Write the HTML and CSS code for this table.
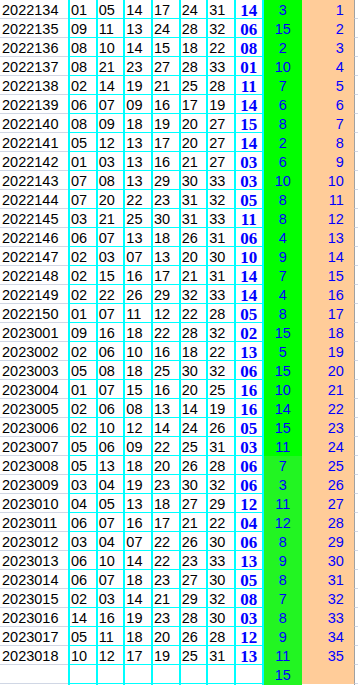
FILE: index.html
```html
<!DOCTYPE html>
<html>
<head>
<meta charset="utf-8">
<link rel="stylesheet" href="styles.css">
</head>
<body>
<div class="sheet">
<div class="r"><div class="id">2022134</div><div class="n">01</div><div class="n">05</div><div class="n">14</div><div class="n">17</div><div class="n">24</div><div class="n">31</div><div class="b">14</div><div class="g">3</div><div class="o">1</div><div class="e"></div></div>
<div class="r"><div class="id">2022135</div><div class="n">09</div><div class="n">11</div><div class="n">13</div><div class="n">24</div><div class="n">28</div><div class="n">32</div><div class="b">06</div><div class="g">15</div><div class="o">2</div><div class="e"></div></div>
<div class="r"><div class="id">2022136</div><div class="n">08</div><div class="n">10</div><div class="n">14</div><div class="n">15</div><div class="n">18</div><div class="n">22</div><div class="b">08</div><div class="g">2</div><div class="o">3</div><div class="e"></div></div>
<div class="r"><div class="id">2022137</div><div class="n">08</div><div class="n">21</div><div class="n">23</div><div class="n">27</div><div class="n">28</div><div class="n">33</div><div class="b">01</div><div class="g">10</div><div class="o">4</div><div class="e"></div></div>
<div class="r"><div class="id">2022138</div><div class="n">02</div><div class="n">14</div><div class="n">19</div><div class="n">21</div><div class="n">25</div><div class="n">28</div><div class="b">11</div><div class="g">7</div><div class="o">5</div><div class="e"></div></div>
<div class="r"><div class="id">2022139</div><div class="n">06</div><div class="n">07</div><div class="n">09</div><div class="n">16</div><div class="n">17</div><div class="n">19</div><div class="b">14</div><div class="g">6</div><div class="o">6</div><div class="e"></div></div>
<div class="r"><div class="id">2022140</div><div class="n">08</div><div class="n">09</div><div class="n">18</div><div class="n">19</div><div class="n">20</div><div class="n">27</div><div class="b">15</div><div class="g">8</div><div class="o">7</div><div class="e"></div></div>
<div class="r"><div class="id">2022141</div><div class="n">05</div><div class="n">12</div><div class="n">13</div><div class="n">17</div><div class="n">20</div><div class="n">27</div><div class="b">14</div><div class="g">2</div><div class="o">8</div><div class="e"></div></div>
<div class="r"><div class="id">2022142</div><div class="n">01</div><div class="n">03</div><div class="n">13</div><div class="n">16</div><div class="n">21</div><div class="n">27</div><div class="b">03</div><div class="g">6</div><div class="o">9</div><div class="e"></div></div>
<div class="r"><div class="id">2022143</div><div class="n">07</div><div class="n">08</div><div class="n">13</div><div class="n">29</div><div class="n">30</div><div class="n">33</div><div class="b">03</div><div class="g">10</div><div class="o">10</div><div class="e"></div></div>
<div class="r"><div class="id">2022144</div><div class="n">07</div><div class="n">20</div><div class="n">22</div><div class="n">23</div><div class="n">31</div><div class="n">32</div><div class="b">05</div><div class="g">8</div><div class="o">11</div><div class="e"></div></div>
<div class="r"><div class="id">2022145</div><div class="n">03</div><div class="n">21</div><div class="n">25</div><div class="n">30</div><div class="n">31</div><div class="n">33</div><div class="b">11</div><div class="g">8</div><div class="o">12</div><div class="e"></div></div>
<div class="r"><div class="id">2022146</div><div class="n">06</div><div class="n">07</div><div class="n">13</div><div class="n">18</div><div class="n">26</div><div class="n">31</div><div class="b">06</div><div class="g">4</div><div class="o">13</div><div class="e"></div></div>
<div class="r"><div class="id">2022147</div><div class="n">02</div><div class="n">03</div><div class="n">07</div><div class="n">13</div><div class="n">20</div><div class="n">30</div><div class="b">10</div><div class="g">9</div><div class="o">14</div><div class="e"></div></div>
<div class="r"><div class="id">2022148</div><div class="n">02</div><div class="n">15</div><div class="n">16</div><div class="n">17</div><div class="n">21</div><div class="n">31</div><div class="b">14</div><div class="g">7</div><div class="o">15</div><div class="e"></div></div>
<div class="r"><div class="id">2022149</div><div class="n">02</div><div class="n">22</div><div class="n">26</div><div class="n">29</div><div class="n">32</div><div class="n">33</div><div class="b">14</div><div class="g">4</div><div class="o">16</div><div class="e"></div></div>
<div class="r"><div class="id">2022150</div><div class="n">01</div><div class="n">07</div><div class="n">11</div><div class="n">12</div><div class="n">22</div><div class="n">28</div><div class="b">05</div><div class="g">8</div><div class="o">17</div><div class="e"></div></div>
<div class="r"><div class="id">2023001</div><div class="n">09</div><div class="n">16</div><div class="n">18</div><div class="n">22</div><div class="n">28</div><div class="n">32</div><div class="b">02</div><div class="g">15</div><div class="o">18</div><div class="e"></div></div>
<div class="r"><div class="id">2023002</div><div class="n">02</div><div class="n">06</div><div class="n">10</div><div class="n">16</div><div class="n">18</div><div class="n">22</div><div class="b">13</div><div class="g">5</div><div class="o">19</div><div class="e"></div></div>
<div class="r"><div class="id">2023003</div><div class="n">05</div><div class="n">08</div><div class="n">18</div><div class="n">25</div><div class="n">30</div><div class="n">32</div><div class="b">06</div><div class="g">15</div><div class="o">20</div><div class="e"></div></div>
<div class="r"><div class="id">2023004</div><div class="n">01</div><div class="n">07</div><div class="n">15</div><div class="n">16</div><div class="n">20</div><div class="n">25</div><div class="b">16</div><div class="g">10</div><div class="o">21</div><div class="e"></div></div>
<div class="r"><div class="id">2023005</div><div class="n">02</div><div class="n">06</div><div class="n">08</div><div class="n">13</div><div class="n">14</div><div class="n">19</div><div class="b">16</div><div class="g">14</div><div class="o">22</div><div class="e"></div></div>
<div class="r"><div class="id">2023006</div><div class="n">02</div><div class="n">10</div><div class="n">12</div><div class="n">14</div><div class="n">24</div><div class="n">26</div><div class="b">05</div><div class="g">15</div><div class="o">23</div><div class="e"></div></div>
<div class="r"><div class="id">2023007</div><div class="n">05</div><div class="n">06</div><div class="n">09</div><div class="n">22</div><div class="n">25</div><div class="n">31</div><div class="b">03</div><div class="g">11</div><div class="o">24</div><div class="e"></div></div>
<div class="r late"><div class="id">2023008</div><div class="n">05</div><div class="n">13</div><div class="n">18</div><div class="n">20</div><div class="n">26</div><div class="n">28</div><div class="b">06</div><div class="g">7</div><div class="o">25</div><div class="e"></div></div>
<div class="r late"><div class="id">2023009</div><div class="n">03</div><div class="n">04</div><div class="n">19</div><div class="n">23</div><div class="n">30</div><div class="n">32</div><div class="b">06</div><div class="g">3</div><div class="o">26</div><div class="e"></div></div>
<div class="r late"><div class="id">2023010</div><div class="n">04</div><div class="n">05</div><div class="n">13</div><div class="n">18</div><div class="n">27</div><div class="n">29</div><div class="b">12</div><div class="g">11</div><div class="o">27</div><div class="e"></div></div>
<div class="r late"><div class="id">2023011</div><div class="n">06</div><div class="n">07</div><div class="n">16</div><div class="n">17</div><div class="n">21</div><div class="n">22</div><div class="b">04</div><div class="g">12</div><div class="o">28</div><div class="e"></div></div>
<div class="r late"><div class="id">2023012</div><div class="n">03</div><div class="n">04</div><div class="n">07</div><div class="n">22</div><div class="n">26</div><div class="n">30</div><div class="b">06</div><div class="g">8</div><div class="o">29</div><div class="e"></div></div>
<div class="r late"><div class="id">2023013</div><div class="n">06</div><div class="n">10</div><div class="n">14</div><div class="n">22</div><div class="n">23</div><div class="n">33</div><div class="b">13</div><div class="g">9</div><div class="o">30</div><div class="e"></div></div>
<div class="r late"><div class="id">2023014</div><div class="n">06</div><div class="n">07</div><div class="n">18</div><div class="n">23</div><div class="n">27</div><div class="n">30</div><div class="b">05</div><div class="g">8</div><div class="o">31</div><div class="e"></div></div>
<div class="r late"><div class="id">2023015</div><div class="n">02</div><div class="n">03</div><div class="n">14</div><div class="n">21</div><div class="n">29</div><div class="n">32</div><div class="b">08</div><div class="g">7</div><div class="o">32</div><div class="e"></div></div>
<div class="r late"><div class="id">2023016</div><div class="n">14</div><div class="n">16</div><div class="n">19</div><div class="n">23</div><div class="n">28</div><div class="n">30</div><div class="b">03</div><div class="g">8</div><div class="o">33</div><div class="e"></div></div>
<div class="r late"><div class="id">2023017</div><div class="n">05</div><div class="n">11</div><div class="n">18</div><div class="n">20</div><div class="n">26</div><div class="n">28</div><div class="b">12</div><div class="g">9</div><div class="o">34</div><div class="e"></div></div>
<div class="r late"><div class="id">2023018</div><div class="n">10</div><div class="n">12</div><div class="n">17</div><div class="n">19</div><div class="n">25</div><div class="n">31</div><div class="b">13</div><div class="g">11</div><div class="o">35</div><div class="e"></div></div>
<div class="r late"><div class="id"></div><div class="n"></div><div class="n"></div><div class="n"></div><div class="n"></div><div class="n"></div><div class="n"></div><div class="b"></div><div class="g">15</div><div class="o"></div><div class="e"></div></div>
<div class="r late"><div class="id"></div><div class="n"></div><div class="n"></div><div class="n"></div><div class="n"></div><div class="n"></div><div class="n"></div><div class="b"></div><div class="g"></div><div class="blank"></div><div class="e"></div></div>
</div>
</body>
</html>
```

FILE: styles.css
```css
html, body {
  margin: 0;
  padding: 0;
  background: #ffffff;
}

body {
  font-family: "Liberation Sans", Arial, sans-serif;
  font-size: 14.5px;
  color: #000000;
  overflow: hidden;
}

.sheet {
  width: 358px;
}

.r {
  display: grid;
  grid-template-columns: 68px repeat(7, 27.667px) 40.333px 52px 4px;
  height: 19px;
}

.r > div {
  box-sizing: border-box;
  height: 19px;
  padding-top: 3px;
  line-height: 15px;
  white-space: nowrap;
  overflow: hidden;
}

.id {
  padding-left: 2px;
  border-bottom: 1px solid #d0d7e5;
}

.n {
  border-left: 2px solid #00ffff;
  border-bottom: 1px solid #00ffff;
  padding-left: 1px;
}

.b {
  border-left: 2px solid #00ffff;
  border-bottom: 1px solid #00ffff;
  text-align: center;
  color: #0000ff;
  font-family: "Liberation Serif", "Times New Roman", serif;
  font-weight: bold;
  font-size: 17px;
}

.g {
  border-left: 2px solid #00ffff;
  background: #00ff00;
  color: #0000ff;
  text-align: center;
}

.late .g {
  background: #22f522;
}

.o {
  background: #ffcc99;
  color: #0000ff;
  text-align: right;
  padding-right: 10px;
}

.blank {
  background: #ffffff;
}

.e {
  border-left: 1px solid #a0a0a0;
  border-bottom: 1px solid #d0d7e5;
}
```
